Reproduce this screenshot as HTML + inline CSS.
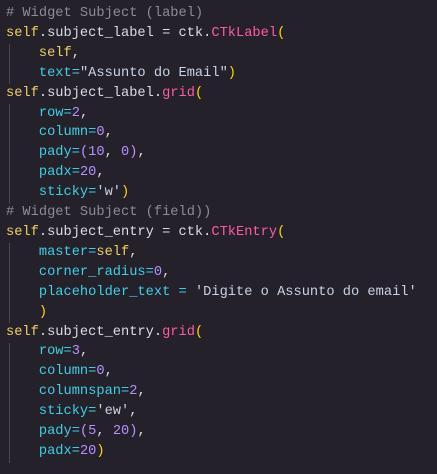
<html><head><style>
body{margin:0;background:#24212b;width:437px;height:474px;overflow:hidden}
pre{margin:0;padding:4px 0 0 6px;font-family:"Liberation Mono",monospace;font-size:13.7px;line-height:19.9px;color:#dcdce4;position:relative}
.c{color:#8c8c94}.s{color:#f0d060}.p{color:#ff5aa6}.y{color:#ffd700}.a{color:#3cd0e6}.n{color:#b690ff}.q{color:#c8d2e6}.o{color:#3cd0e6}.v{color:#c090ff}
.g{position:absolute;left:9px;width:1px;background:#4a4752}
</style></head><body>
<div class="g" style="top:44px;height:40px"></div>
<div class="g" style="top:104px;height:100px"></div>
<div class="g" style="top:243px;height:80px"></div>
<div class="g" style="top:343px;height:120px"></div>
<pre><span class="c"># Widget Subject (label)</span>
<span class="s">self</span>.subject_label = ctk.<span class="p">CTkLabel</span><span class="y">(</span>
    <span class="s">self</span>,
    <span class="a">text</span><span class="o">=</span><span class="q">"Assunto do Email"</span><span class="y">)</span>
<span class="s">self</span>.subject_label.<span class="p">grid</span><span class="y">(</span>
    <span class="a">row</span><span class="o">=</span><span class="n">2</span>,
    <span class="a">column</span><span class="o">=</span><span class="n">0</span>,
    <span class="a">pady</span><span class="o">=</span><span class="v">(</span><span class="n">10</span>, <span class="n">0</span><span class="v">)</span>,
    <span class="a">padx</span><span class="o">=</span><span class="n">20</span>,
    <span class="a">sticky</span><span class="o">=</span><span class="q">'w'</span><span class="y">)</span>
<span class="c"># Widget Subject (field))</span>
<span class="s">self</span>.subject_entry = ctk.<span class="p">CTkEntry</span><span class="y">(</span>
    <span class="a">master</span><span class="o">=</span><span class="s">self</span>,
    <span class="a">corner_radius</span><span class="o">=</span><span class="n">0</span>,
    <span class="a">placeholder_text</span> <span class="o">=</span> <span class="q">'Digite o Assunto do email'</span>
    <span class="y">)</span>
<span class="s">self</span>.subject_entry.<span class="p">grid</span><span class="y">(</span>
    <span class="a">row</span><span class="o">=</span><span class="n">3</span>,
    <span class="a">column</span><span class="o">=</span><span class="n">0</span>,
    <span class="a">columnspan</span><span class="o">=</span><span class="n">2</span>,
    <span class="a">sticky</span><span class="o">=</span><span class="q">'ew'</span>,
    <span class="a">pady</span><span class="o">=</span><span class="v">(</span><span class="n">5</span>, <span class="n">20</span><span class="v">)</span>,
    <span class="a">padx</span><span class="o">=</span><span class="n">20</span><span class="y">)</span></pre>
</body></html>
